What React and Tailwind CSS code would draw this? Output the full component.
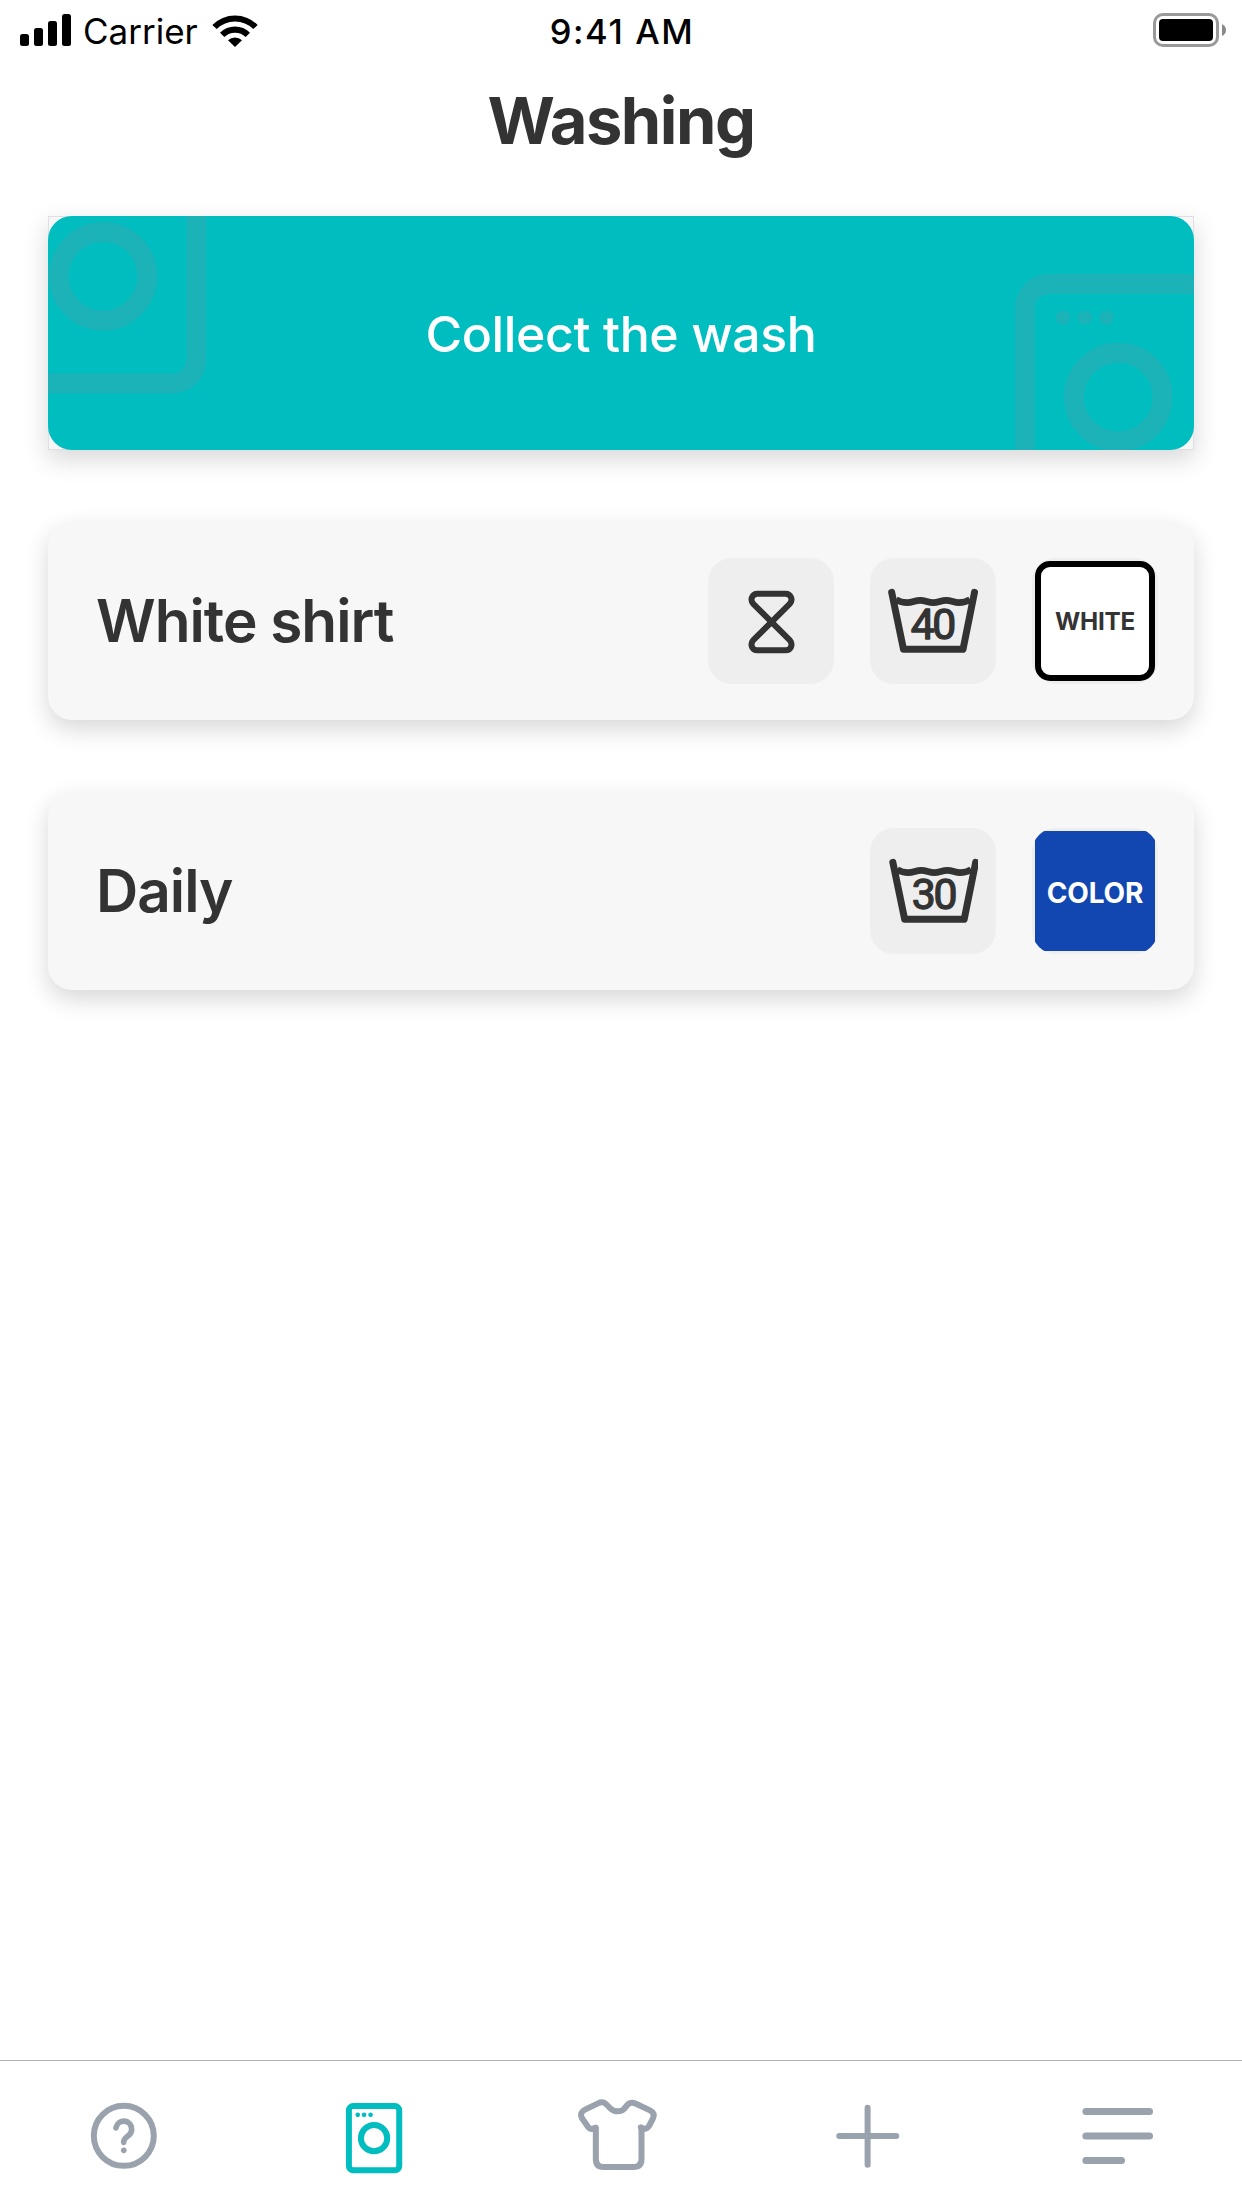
import React from "react";

const GRAY = "#9aa2ae";
const TEAL = "#00bdc0";
const INK = "#333333";

function StatusBar() {
  return (
    <div className="grid h-[60px] grid-cols-3 items-center pr-4 pl-5 text-black">
      <div className="flex items-center">
        <svg className="h-8 w-[51px]" viewBox="0 0 51 32">
          <rect x="0" y="20" width="9" height="12" rx="2.5" />
          <rect x="14" y="14" width="9" height="18" rx="2.5" />
          <rect x="28" y="7" width="9" height="25" rx="2.5" />
          <rect x="42" y="0" width="9" height="32" rx="2.5" />
        </svg>
        <span className="mt-0.5 ml-3 text-[35px] leading-[56px]">Carrier</span>
        <svg className="ml-3.5 h-[33px] w-[46px]" viewBox="0 0 138 99">
          <path d="M1 33 A96 96 0 0 1 137 33 L124 45 A79 79 0 0 0 14 45 Z" />
          <path d="M24 56 A64 64 0 0 1 114 56 L101 69 A46 46 0 0 0 37 69 Z" />
          <path d="M48 79 A31 31 0 0 1 90 79 L69 99 Z" />
        </svg>
      </div>
      <span className="mt-[3px] mr-[2px] text-center text-[34.5px] leading-[56px] font-medium tracking-[1.6px] whitespace-nowrap">
        9:41 AM
      </span>
      <div className="flex items-center justify-end">
        <div className="h-[34px] w-[66px] rounded-[10px] border-[3px] border-[#999999] p-[3px]">
          <div className="h-full w-full rounded-[4px] bg-black" />
        </div>
        <svg className="ml-[3px] h-3 w-1" viewBox="0 0 4 12">
          <path d="M0 0 Q4 2 4 6 Q4 10 0 12 Z" fill="#8a8a8a" />
        </svg>
      </div>
    </div>
  );
}

function CollectButton() {
  return (
    <div className="border border-[#dedee3] bg-[#f7f7f7] shadow-[0_9px_24px_rgba(0,0,0,0.16)]">
      <button className="relative -m-px flex h-[234px] w-[1146px] items-center justify-center overflow-hidden rounded-3xl bg-[#00bdc0]">
        <svg
          className="absolute inset-0 h-full w-full"
          viewBox="0 0 1146 234"
          fill="none"
          stroke="#1bb2b8"
          strokeWidth="20"
        >
          <circle cx="55" cy="60.3" r="44.3" />
          <path d="M-40 167.5 H124.4 A24 24 0 0 0 148.4 143.5 V-20" />
          <circle cx="1070.3" cy="181" r="44.3" />
          <rect x="977" y="68" width="186.7" height="240" rx="24" />
          <g fill="#1bb2b8" stroke="none">
            <circle cx="1015" cy="101.7" r="7.2" />
            <circle cx="1036.8" cy="101.7" r="7.2" />
            <circle cx="1058.7" cy="101.7" r="7.2" />
          </g>
        </svg>
        <span className="relative mt-0.5 text-[50px] leading-[64px] font-medium tracking-[-0.4px] text-white">
          Collect the wash
        </span>
      </button>
    </div>
  );
}

function Tile({ children }) {
  return (
    <div className="flex size-[126px] items-center justify-center overflow-hidden rounded-3xl bg-[#eeeeee]">
      {children}
    </div>
  );
}

function Hourglass() {
  return (
    <svg className="size-[90px]" viewBox="54 54 270 270" fill="none" stroke={INK} strokeWidth="18">
      <path d="M148 107 H233 C249 107 256 126 245 138 L136 246 C125 259 132 277 148 277 H233 C249 277 256 259 245 246 L136 138 C125 126 132 107 148 107 Z" />
    </svg>
  );
}

function WashTub({ degrees, shift = 0 }) {
  const xs = degrees === "40" ? "122.500 187" : "121.500 187";
  return (
    <svg className="size-[90px]" viewBox="54 54 270 270">
      <g transform={`translate(${shift} 0)`}>
        <path
          d="M65 103 L100.5 274 H279 L313.500 103"
          fill="none"
          stroke={INK}
          strokeWidth="21"
          strokeLinecap="round"
          strokeLinejoin="round"
        />
        <path
          d="M78 125 C88 131 98 134 111.500 134 C127 134 135 127 150.500 127 C166 127 174 134 189.500 134 C205 134 213 127 228.500 127 C244 127 252 134 266.500 134 C280 134 290 131 300 125"
          fill="none"
          stroke={INK}
          strokeWidth="20"
        />
        <text
          x={xs}
          y="243.500"
          fill={INK}
          stroke={INK}
          strokeWidth="4"
          strokeLinejoin="round"
          className="font-['Roboto',sans-serif] text-[128px] font-normal"
        >
          {degrees}
        </text>
      </g>
    </svg>
  );
}

function Card({ title, children }) {
  return (
    <div className="flex h-[198px] items-center justify-between rounded-3xl bg-[#f7f7f7] pr-9 pl-12 shadow-[0_9px_24px_rgba(0,0,0,0.16)]">
      <span className="text-[58.5px] leading-[72px] font-semibold tracking-[-1px] text-[#333333]">
        {title}
      </span>
      <div className="flex gap-9">{children}</div>
    </div>
  );
}

function TabBar() {
  const tabs = [
    {
      id: "help",
      box: "57.600 153 270 270",
      color: GRAY,
      art: (
        <>
          <circle cx="192" cy="287.500" r="90" />
          <path d="M168.500 263.500 C173 237 215 235 215.500 269 C215.500 290 190 289 191.500 307" strokeLinecap="round" strokeWidth="17" />
          <circle cx="192" cy="331" r="8.500" fill={GRAY} stroke="none" />
        </>
      ),
    },
    {
      id: "washing",
      box: "804.300 153 270 270",
      color: TEAL,
      art: (
        <>
          <rect x="867" y="198" width="151" height="193" rx="13" />
          <circle cx="942.500" cy="294.500" r="39.500" />
          <g fill={TEAL} stroke="none">
            <circle cx="893.500" cy="224.500" r="7" />
            <circle cx="912.500" cy="224.500" r="7" />
            <circle cx="932" cy="224.500" r="7" />
          </g>
        </>
      ),
    },
    {
      id: "clothes",
      box: "78 153 270 270",
      color: GRAY,
      art: (
        <path
          strokeLinecap="round"
          strokeLinejoin="round"
          d="M137.500 263 V357 Q137.500 381 160 381 H251 Q274.500 381 274.500 357 V270 L272.500 262 Q289 272 297 258 L309 235 Q316 219 300 211 L258 191 Q242 184 232 195 L222 207 Q215 214 203.500 214 Q191 214 183 207 L168 192 Q157 183 144 190 L105 209 Q87 218 96 235 L115 262 Q124 271 137.500 263"
        />
      ),
    },
    {
      id: "add",
      box: "823.200 153 270 270",
      color: GRAY,
      art: <path strokeLinecap="round" d="M869 288 H1040 M954 203 V374" />,
    },
    {
      id: "menu",
      box: "98.400 153 270 270",
      color: GRAY,
      art: (
        <path strokeLinecap="round" strokeWidth="21" d="M137 214.500 H328 M137 288 H328 M137 361.500 H244" />
      ),
    },
  ];
  return (
    <nav className="grid h-[148px] grid-cols-5 border-t border-[#b2b2b2] bg-white pt-[30px]">
      {tabs.map((t) => (
        <div key={t.id} className="flex justify-center">
          <svg className="size-[90px]" viewBox={t.box} fill="none" stroke={t.color} strokeWidth="18">
            {t.art}
          </svg>
        </div>
      ))}
    </nav>
  );
}

export default function App() {
  return (
    <div className="flex h-[2208px] w-[1242px] flex-col bg-white font-['Inter',sans-serif]">
      <StatusBar />
      <h1 className="text-center text-[65px] leading-[122px] font-bold tracking-[-1.5px] text-[#333333]">
        Washing
      </h1>
      <main className="flex flex-1 flex-col gap-[72px] px-12 pt-[34px]">
        <CollectButton />
        <Card title="White shirt">
          <Tile>
            <Hourglass />
          </Tile>
          <Tile>
            <WashTub degrees="40" />
          </Tile>
          <Tile>
            <div className="flex size-[120px] items-center justify-center rounded-[15px] border-6 border-black bg-white text-[24.3px] font-bold tracking-[-0.25px] text-[#333333]">
              WHITE
            </div>
          </Tile>
        </Card>
        <Card title="Daily">
          <Tile>
            <WashTub degrees="30" shift={3.5} />
          </Tile>
          <Tile>
            <div className="flex size-[120px] items-center justify-center bg-[#1247b2] pt-[4px] text-[28px] font-bold tracking-[-0.2px] text-white">
              COLOR
            </div>
          </Tile>
        </Card>
      </main>
      <TabBar />
    </div>
  );
}
